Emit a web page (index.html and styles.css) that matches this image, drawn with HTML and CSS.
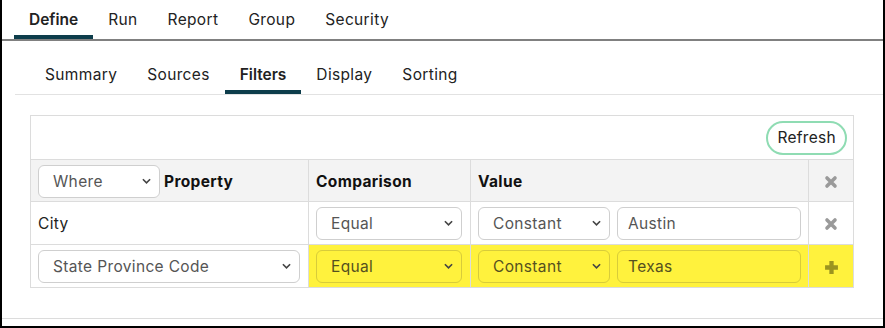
FILE: index.html
```html
<!DOCTYPE html>
<html>
<head>
<meta charset="utf-8">
<link rel="stylesheet" href="styles.css">
</head>
<body>
<div class="frame">
  <nav class="topnav">
    <a class="tab active">Define</a>
    <a class="tab">Run</a>
    <a class="tab">Report</a>
    <a class="tab">Group</a>
    <a class="tab">Security</a>
  </nav>
  <nav class="subnav">
    <a class="stab">Summary</a>
    <a class="stab">Sources</a>
    <a class="stab active">Filters</a>
    <a class="stab">Display</a>
    <a class="stab">Sorting</a>
  </nav>
  <div class="content">
    <table class="filters">
      <tr class="toolbar">
        <td colspan="4"><div class="tool-inner"><button class="refresh">Refresh</button></div></td>
      </tr>
      <tr class="head">
        <th class="c1"><div class="propcell"><div class="sel sel-where"><span>Where</span><svg class="chev" viewBox="0 0 10 6"><path d="M1 1l4 4 4-4" fill="none" stroke="#444" stroke-width="1.8"/></svg></div><span class="plabel">Property</span></div></th>
        <th class="c2">Comparison</th>
        <th class="c3">Value</th>
        <th class="c4"><svg class="ico" viewBox="0 0 14 14"><path d="M3 3l8 8M11 3l-8 8" stroke="#9a9a9a" stroke-width="3.6" stroke-linecap="round"/></svg></th>
      </tr>
      <tr class="row">
        <td class="c1 city">City</td>
        <td class="c2"><div class="sel sel-cmp"><span>Equal</span><svg class="chev" viewBox="0 0 10 6"><path d="M1 1l4 4 4-4" fill="none" stroke="#444" stroke-width="1.8"/></svg></div></td>
        <td class="c3"><div class="valcell"><div class="sel sel-type"><span>Constant</span><svg class="chev" viewBox="0 0 10 6"><path d="M1 1l4 4 4-4" fill="none" stroke="#444" stroke-width="1.8"/></svg></div><div class="inp">Austin</div></div></td>
        <td class="c4"><svg class="ico" viewBox="0 0 14 14"><path d="M3 3l8 8M11 3l-8 8" stroke="#9a9a9a" stroke-width="3.6" stroke-linecap="round"/></svg></td>
      </tr>
      <tr class="row newrow">
        <td class="c1"><div class="sel sel-prop"><span>State Province Code</span><svg class="chev" viewBox="0 0 10 6"><path d="M1 1l4 4 4-4" fill="none" stroke="#444" stroke-width="1.8"/></svg></div></td>
        <td class="c2 hl"><div class="sel sel-cmp"><span>Equal</span><svg class="chev" viewBox="0 0 10 6"><path d="M1 1l4 4 4-4" fill="none" stroke="#444" stroke-width="1.8"/></svg></div></td>
        <td class="c3 hl"><div class="valcell"><div class="sel sel-type"><span>Constant</span><svg class="chev" viewBox="0 0 10 6"><path d="M1 1l4 4 4-4" fill="none" stroke="#444" stroke-width="1.8"/></svg></div><div class="inp">Texas</div></div></td>
        <td class="c4 hl"><svg class="ico plus" viewBox="0 0 14 14"><path d="M7 1v12M1 7h12" stroke="#9b9420" stroke-width="4"/></svg></td>
      </tr>
    </table>
  </div>
  <div class="footer-line"></div>
</div>
</body>
</html>
```

FILE: styles.css
```css
* { box-sizing: border-box; }
html, body { margin: 0; padding: 0; background: #fff; }
body {
  font-family: "Inter", "Liberation Sans", sans-serif;
  color: #222;
  letter-spacing: 0.35px;
}
.frame {
  width: 885px;
  height: 328px;
  border-left: 2px solid #000;
  border-right: 2px solid #000;
  border-bottom: 2px solid #000;
  display: flex;
  flex-direction: column;
}
.topnav {
  display: flex;
  height: 41px;
  padding-left: 12px;
  border-bottom: 2px solid #808080;
}
.tab {
  padding: 0 15px;
  font-size: 15.5px;
  line-height: 40px;
  height: 39px;
  color: #222;
  border-bottom: 4px solid transparent;
}
.tab.active {
  font-weight: 600;
  letter-spacing: 0;
  border-bottom-color: #0d3d4b;
}
.subnav {
  display: flex;
  margin-left: 13px;
  padding-left: 15px;
  height: 54px;
  align-items: flex-end;
  border-bottom: 1px solid #e2e2e2;
}
.stab {
  padding: 0 15px;
  font-size: 15.5px;
  line-height: 38px;
  height: 38px;
  color: #222;
  border-bottom: 4px solid transparent;
}
.stab.active {
  font-weight: 600;
  letter-spacing: 0;
  border-bottom-color: #0d3d4b;
}
.content {
  padding: 20px 30px 0 28px;
  flex: 1;
}
.filters {
  width: 824px;
  border-collapse: collapse;
  border: 1px solid #dcdcdc;
  font-size: 15.5px;
}
.filters td, .filters th {
  border: 1px solid #dcdcdc;
  padding: 0;
  text-align: left;
}
.toolbar td { height: 44px; }
.tool-inner {
  display: flex;
  justify-content: flex-end;
  padding-right: 6px;
}
.refresh {
  font-family: inherit;
  font-size: 15.5px;
  letter-spacing: 0.3px;
  color: #222;
  background: #fff;
  border: 2px solid #8fdcb3;
  border-radius: 17px;
  height: 34px;
  padding: 0 9px;
}
.head th {
  background: #f3f3f3;
  height: 42px;
  font-weight: 700;
  color: #111;
  padding-top: 1px;
}
.c1 { width: 278px; padding-left: 7px !important; }
.c2 { width: 162px; padding-left: 7px !important; }
.c3 { width: 338px; padding-left: 7px !important; }
.c4 { width: 45px; text-align: center !important; }
.propcell { display: flex; align-items: center; gap: 4px; }
.row td { height: 43px; }
.city { color: #222; }
.sel {
  display: flex;
  align-items: center;
  justify-content: space-between;
  height: 33px;
  border: 1px solid #cfcfcf;
  border-radius: 6px;
  background: #fff;
  padding: 1px 8px 0 14px;
  font-weight: 400;
  color: #555;
}
.chev { width: 9px; height: 6px; margin-top: -2px; }
.sel-where { width: 122px; }
.sel-cmp { width: 146px; }
.sel-type { width: 132px; }
.sel-prop { width: 262px; padding-left: 14px; }
.valcell { display: flex; gap: 7px; }
.inp {
  display: flex;
  align-items: center;
  width: 184px;
  height: 33px;
  border: 1px solid #cfcfcf;
  border-radius: 6px;
  padding: 1px 10px 0;
  color: #555;
  background: #fff;
}
.ico { width: 14px; height: 14px; vertical-align: middle; }
.ico.plus { width: 15px; height: 15px; }
.hl { background: #fff23d; }
.hl .sel, .hl .inp {
  background: transparent;
  border-color: #d8cc3a;
  color: #555020;
}
.footer-line {
  height: 1px;
  background: #dcdcdc;
  margin-bottom: 7px;
}
```
